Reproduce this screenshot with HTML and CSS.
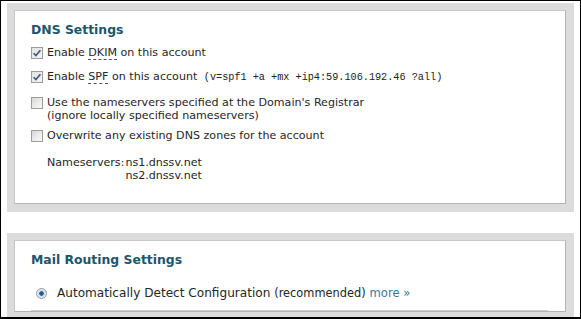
FILE: index.html
```html
<!DOCTYPE html>
<html lang="en">
<head>
    <meta charset="UTF-8">
    <title>Account Settings</title>
    <link rel="stylesheet" href="styles.css">
</head>
<body>
    <div class="frame">
        <div class="panel">
            <div class="panel-box dns-box">
                <h2 class="panel-title">DNS Settings</h2>

                <label class="option opt-dkim">
                    <span class="check is-checked">
                        <svg viewBox="0 0 12 12" width="12" height="12"><path d="M2.6 6.2 L4.9 8.6 L9.4 3.2" /></svg>
                    </span>
                    <span class="option-text">Enable <abbr>DKIM</abbr> on this account</span>
                </label>

                <label class="option opt-spf">
                    <span class="check is-checked">
                        <svg viewBox="0 0 12 12" width="12" height="12"><path d="M2.6 6.2 L4.9 8.6 L9.4 3.2" /></svg>
                    </span>
                    <span class="option-text">Enable <abbr>SPF</abbr> on this account <code class="spf-record">(v=spf1 +a +mx +ip4:59.106.192.46 ?all)</code></span>
                </label>

                <label class="option opt-registrar">
                    <span class="check"></span>
                    <span class="option-text">Use the nameservers specified at the Domain's Registrar<br>(ignore locally specified nameservers)</span>
                </label>

                <label class="option opt-overwrite">
                    <span class="check"></span>
                    <span class="option-text">Overwrite any existing DNS zones for the account</span>
                </label>

                <div class="nameservers">
                    <span class="ns-label">Nameservers:</span>
                    <span class="ns-list">ns1.dnssv.net<br>ns2.dnssv.net</span>
                </div>
            </div>
        </div>

        <div class="panel panel-routing">
            <div class="panel-box">
                <h2 class="panel-title">Mail Routing Settings</h2>
                <label class="route-option">
                    <span class="radio is-selected"></span>
                    <span class="route-text">Automatically Detect Configuration <small>(recommended)</small> <a href="#" class="more-link">more &raquo;</a></span>
                </label>
                <hr class="route-sep">
            </div>
        </div>
    </div>
</body>
</html>
```
FILE: styles.css
```css
/* Reset */
* {
    margin: 0;
    padding: 0;
    box-sizing: border-box;
}

body {
    font-family: 'DejaVu Sans', Verdana, sans-serif;
    color: #262626;
    background-color: #fff;
}

.frame {
    width: 581px;
    height: 319px;
    border: 1px solid #000;
    border-bottom-width: 2px;
    padding: 2px 6px 0 6px;
    overflow: hidden;
}

/* Grey outer panel */
.panel {
    background-color: #dcdcdc;
    padding: 7px 8px 8px 7px;
}

.panel-routing {
    margin-top: 21px;
}

.panel-box {
    background-color: #fff;
    border: 1px solid #c6c6c6;
    border-right-color: #b4b4b4;
    border-bottom-color: #b4b4b4;
    padding: 11px 17px 0 16px;
}

.dns-box {
    padding-bottom: 21px;
}

.panel-title {
    font-size: 12.4px;
    line-height: 16px;
    font-weight: bold;
    color: #1d5569;
}

/* Checkbox rows */
.option {
    display: flex;
    align-items: flex-start;
    gap: 4px;
    font-size: 11.1px;
    line-height: 13px;
}

.opt-dkim { margin-top: 8px; }
.opt-spf { margin-top: 11px; }
.opt-registrar { margin-top: 12px; }
.opt-overwrite { margin-top: 7px; }

.check {
    flex: none;
    width: 12px;
    height: 12px;
    margin-top: 1px;
    border: 1px solid #9c9c9c;
    background: linear-gradient(135deg, #d6d6d6 0%, #eeeeee 60%, #fafafa 100%);
    position: relative;
}

.check svg {
    position: absolute;
    left: -1px;
    top: -1px;
}

.check path {
    fill: none;
    stroke: #3d5877;
    stroke-width: 1.6;
}

.check.is-checked {
    background: linear-gradient(135deg, #e2e2e2 0%, #f4f4f4 100%);
}

abbr {
    text-decoration: none;
    border-bottom: 1px dashed #555;
}

.spf-record {
    font-family: 'Liberation Mono', monospace;
    font-size: 10.2px;
    color: #222;
    margin-left: 3px;
}

/* Nameserver list */
.nameservers {
    display: flex;
    gap: 1px;
    margin-top: 14px;
    padding-left: 16px;
    font-size: 11.1px;
    line-height: 13px;
}

/* Mail routing */
.route-option {
    display: flex;
    align-items: center;
    gap: 10px;
    margin-top: 17px;
    padding-left: 5px;
    font-size: 12.1px;
    line-height: 16px;
}

.radio {
    flex: none;
    width: 11px;
    height: 11px;
    border-radius: 50%;
    border: 1px solid #8d9aa6;
    background: radial-gradient(circle, #1d4f86 0%, #2f6aa8 32%, #d7dde3 40%, #f3f3f3 100%);
}

.route-text small {
    font-size: 11.4px;
}

.more-link {
    font-size: 11.6px;
    color: #3b7797;
    text-decoration: none;
}

.route-sep {
    border: none;
    border-top: 1px solid #cfcfcf;
    margin-top: 9px;
}
```
